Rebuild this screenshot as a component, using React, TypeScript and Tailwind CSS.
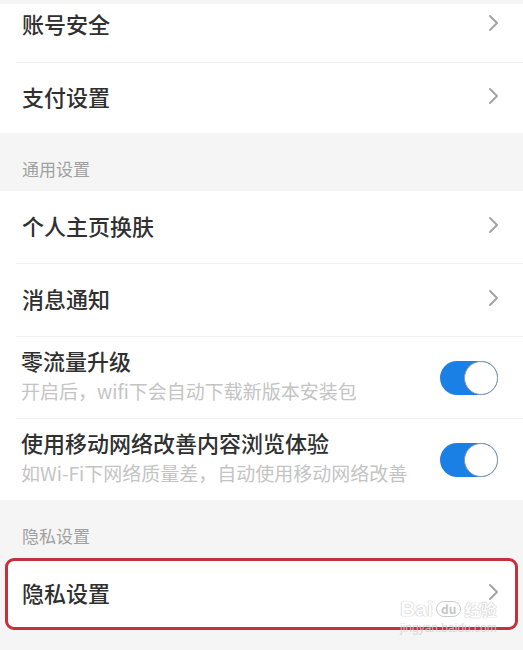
import React, { useState } from 'react';

const FONT = { fontFamily: '"Noto Sans CJK SC", "Noto Sans", sans-serif' };

const Chevron: React.FC = () => (
  <svg width="11" height="20" viewBox="0 0 11 20" className="shrink-0">
    <path d="M2 3 L9 10 L2 17" fill="none" stroke="#a3a3a3" strokeWidth="2" strokeLinecap="round" strokeLinejoin="round" />
  </svg>
);

const Toggle: React.FC<{ on: boolean; onChange: () => void }> = ({ on, onChange }) => (
  <button
    onClick={onChange}
    className={`relative w-[58px] h-[34px] rounded-full shrink-0 ${on ? 'bg-[#1b80e6]' : 'bg-[#dcdcdc]'}`}
  >
    <span
      className={`absolute top-0 w-[34px] h-[34px] rounded-full bg-white border border-[#8a9aa8] ${on ? 'right-0' : 'left-0'}`}
    />
  </button>
);

const Divider: React.FC = () => <div className="ml-4 h-px bg-[#f0f0f0]" />;

const LinkRow: React.FC<{ label: string; className?: string }> = ({ label, className = 'h-[72px] pb-[4px]' }) => (
  <div className={`flex items-center justify-between pl-[22px] pr-[24px] ${className}`}>
    <span className="text-[22px] font-medium text-[#303030] leading-none">{label}</span>
    <Chevron />
  </div>
);

const ToggleRow: React.FC<{ title: string; sub: string }> = ({ title, sub }) => {
  const [on, setOn] = useState(true);
  return (
    <div className="flex items-center justify-between h-[81px] pl-[21px] pr-[25px]">
      <div className="flex flex-col gap-[10px] pb-[6px]">
        <span className="text-[22px] font-medium text-[#303030] leading-none">{title}</span>
        <span className="text-[19px] text-[#c4c4c4] leading-none">{sub}</span>
      </div>
      <Toggle on={on} onChange={() => setOn(!on)} />
    </div>
  );
};

const SectionHeader: React.FC<{ label: string }> = ({ label }) => (
  <div className="h-[58px] flex items-end pl-[22px] pb-[14px]">
    <span className="text-[17px] text-[#a0a0a0] leading-none">{label}</span>
  </div>
);

export default function App() {
  return (
    <div className="relative w-[523px] h-[650px] overflow-hidden bg-[#f5f5f5]" style={FONT}>
      <div className="h-[4px]" />
      {/* account group */}
      <div className="bg-white">
        <LinkRow label="账号安全" className="h-[58px] pb-[20px]" />
        <Divider />
        <LinkRow label="支付设置" className="h-[70px] pb-[4px]" />
      </div>

      <SectionHeader label="通用设置" />
      <div className="bg-white">
        <LinkRow label="个人主页换肤" />
        <Divider />
        <LinkRow label="消息通知" />
        <Divider />
        <ToggleRow title="零流量升级" sub="开启后，wifi下会自动下载新版本安装包" />
        <Divider />
        <ToggleRow title="使用移动网络改善内容浏览体验" sub="如Wi-Fi下网络质量差，自动使用移动网络改善" />
      </div>

      <SectionHeader label="隐私设置" />
      <div className="mx-[5px] h-[72px] bg-white border-[3px] border-[#c4303b] rounded-[9px] flex items-center justify-between pl-[14px] pr-[16px] pb-[4px]">
        <span className="text-[22px] font-medium text-[#303030] leading-none">隐私设置</span>
        <Chevron />
      </div>

      {/* watermark */}
      <div className="absolute left-[400px] top-[598px] flex flex-col items-center pointer-events-none opacity-80">
        <div className="flex items-center gap-[3px] leading-none font-bold text-white [text-shadow:0_0_1px_#a8a8a8,0_0_1px_#a8a8a8]">
          <span className="text-[21px]" style={{ fontFamily: '"Liberation Sans", sans-serif' }}>Bai</span>
          <span className="text-[12px] rounded-full border border-[#c0c0c0] px-[4px] py-[1px] bg-white text-[#b8b8b8] [text-shadow:none]">du</span>
          <span className="text-[16px]">经验</span>
        </div>
        <span className="text-[12px] leading-none mt-[3px] text-[#d0d0d0]" style={{ fontFamily: '"Liberation Sans", sans-serif' }}>jingyan.baidu.com</span>
      </div>
    </div>
  );
}
